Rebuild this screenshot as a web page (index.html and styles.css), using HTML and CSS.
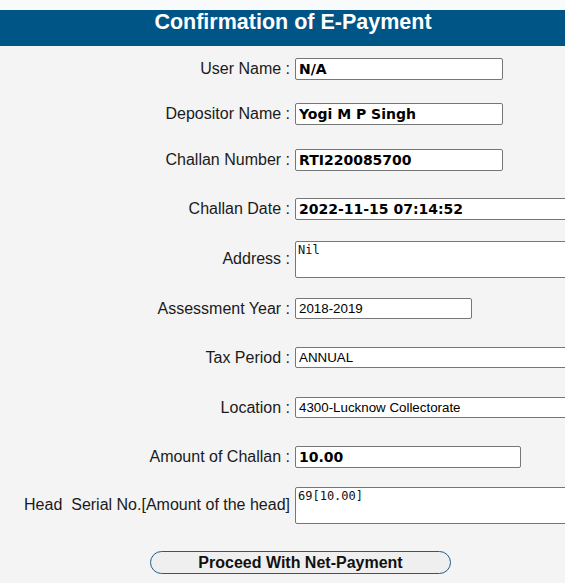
FILE: index.html
```html
<!DOCTYPE html>
<html>
<head>
<meta charset="utf-8">
<link rel="stylesheet" href="styles.css">
</head>
<body>
<div class="page">
  <div class="topstrip"></div>
  <h1 class="title">Confirmation of E-Payment</h1>
  <div class="form">
    <div class="label">User Name :</div>
    <div class="field"><input class="val val-bold w208" value="N/A" readonly></div>

    <div class="label">Depositor Name :</div>
    <div class="field"><input class="val val-bold w208" value="Yogi M P Singh" readonly></div>

    <div class="label">Challan Number :</div>
    <div class="field"><input class="val val-bold w208" value="RTI220085700" readonly></div>

    <div class="label">Challan Date :</div>
    <div class="field"><input class="val val-bold wide" value="2022-11-15 07:14:52" readonly></div>

    <div class="label">Address :</div>
    <div class="field"><textarea class="area wide" readonly>Nil</textarea></div>

    <div class="label">Assessment Year :</div>
    <div class="field"><input class="val val-plain w177" value="2018-2019" readonly></div>

    <div class="label">Tax Period :</div>
    <div class="field"><input class="val val-plain wide" value="ANNUAL" readonly></div>

    <div class="label">Location :</div>
    <div class="field"><input class="val val-plain wide" value="4300-Lucknow Collectorate" readonly></div>

    <div class="label">Amount of Challan :</div>
    <div class="field"><input class="val val-bold w226" value="10.00" readonly></div>

    <div class="label">Head&nbsp; Serial No.[Amount of the head]</div>
    <div class="field"><textarea class="area wide" readonly>69[10.00]</textarea></div>
  </div>
  <div class="actions">
    <button class="proceed" type="button">Proceed With Net-Payment</button>
  </div>
</div>
</body>
</html>
```

FILE: styles.css
```css
html, body {
  margin: 0;
  padding: 0;
  background: #f4f4f4;
  overflow: hidden;
}

.page {
  width: 586px;
  font-family: "Liberation Sans", Arial, sans-serif;
  color: #111;
}

.topstrip {
  height: 10px;
  background: #f9fafb;
}

.title {
  margin: 0;
  height: 25px;
  padding-bottom: 11px;
  line-height: 25px;
  background: #005587;
  color: #fff;
  font-size: 21.5px;
  font-weight: bold;
  text-align: center;
}

.form {
  display: grid;
  grid-template-columns: 291px 1fr;
  grid-template-rows: 46px 44px 48px 50px 50px 49px 49px 51px 48px 48px;
}

.label {
  display: flex;
  align-items: center;
  justify-content: flex-end;
  padding-right: 1px;
  font-size: 16px;
  color: #1a1a1a;
  white-space: nowrap;
}

.field {
  display: flex;
  align-items: center;
  padding-left: 4px;
}

.val {
  box-sizing: border-box;
  margin: 0;
  height: 22px;
  padding: 1px 3px;
  border: 1px solid #767676;
  border-radius: 2px;
  background: #fff;
  color: #000;
  outline: none;
}

.val-bold {
  font-family: "DejaVu Sans", Verdana, sans-serif;
  font-weight: bold;
  font-size: 14px;
}

.val-plain {
  height: 21px;
  font-family: "Liberation Sans", Arial, sans-serif;
  font-size: 13.33px;
}

.w208 { width: 208px; }
.w177 { width: 177px; }
.w226 { width: 226px; }
.wide { width: 300px; }

.area {
  box-sizing: border-box;
  margin: 0;
  height: 37px;
  padding: 1px 2px;
  border: 1px solid #767676;
  border-radius: 2px;
  background: #fff;
  color: #111;
  font-family: "DejaVu Sans Mono", monospace;
  font-size: 12px;
  resize: none;
  outline: none;
}

.actions {
  padding: 22px 0 0 150px;
}

.proceed {
  box-sizing: border-box;
  width: 301px;
  height: 23px;
  margin: 0;
  padding: 0;
  border: 1px solid #1c5d8e;
  border-radius: 12px;
  background: #efefef;
  font-family: "Liberation Sans", Arial, sans-serif;
  font-weight: bold;
  font-size: 16px;
  color: #111;
  line-height: 21px;
}
```
